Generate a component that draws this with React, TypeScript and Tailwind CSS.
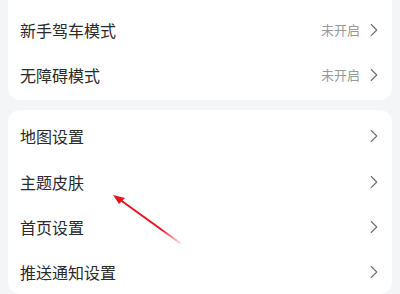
import { ChevronRight } from 'lucide-react';

const font = { fontFamily: '"Noto Sans CJK SC", "Noto Sans", sans-serif' };

function Row({ label, value }: { label: string; value?: string }) {
  return (
    <div className="flex items-center justify-between pl-3 pr-[7px] h-[45px]">
      <span className="text-[16px] text-[#2a2a2a]">{label}</span>
      <div className="flex items-center gap-[3px]">
        {value && <span className="text-[13px] text-[#999]">{value}</span>}
        <ChevronRight className="w-[22px] h-[22px] text-[#6f6f6f]" strokeWidth={1.2} />
      </div>
    </div>
  );
}

export default function App() {
  return (
    <div className="relative w-[400px] h-[294px] overflow-hidden bg-[#f4f5f7] px-2" style={font}>
      {/* top card, cut off above */}
      <div className="bg-white rounded-b-[12px] pt-[7px] pb-[3px]">
        <Row label="新手驾车模式" value="未开启" />
        <Row label="无障碍模式" value="未开启" />
      </div>

      <div className="bg-white rounded-[12px] mt-[10px] pt-[3px]">
        <Row label="地图设置" />
        <div className="h-[1px]" />
        <Row label="主题皮肤" />
        <Row label="首页设置" />
        <Row label="推送通知设置" />
      </div>

      {/* red annotation arrow */}
      <svg className="absolute left-0 top-0 pointer-events-none" width="400" height="294">
        <defs>
          <linearGradient id="fade" x1="115" y1="196" x2="180" y2="243" gradientUnits="userSpaceOnUse">
            <stop offset="0" stopColor="#e8141c" />
            <stop offset="0.7" stopColor="#e8141c" />
            <stop offset="1" stopColor="#e8141c" stopOpacity="0.15" />
          </linearGradient>
        </defs>
        <line x1="119" y1="199" x2="180" y2="243" stroke="url(#fade)" strokeWidth="2" strokeLinecap="round" />
        <polygon points="113,195 125,198 119,204" fill="#e8141c" />
      </svg>
    </div>
  );
}
